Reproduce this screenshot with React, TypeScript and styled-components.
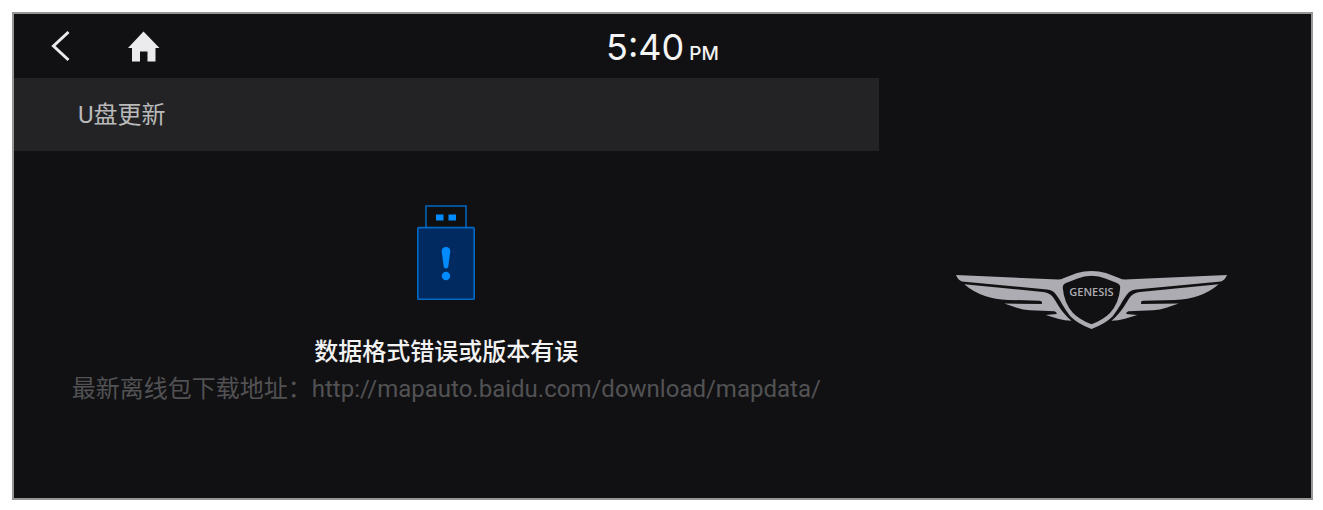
import React from "react";
import styled, { createGlobalStyle } from "styled-components";

const GlobalStyle = createGlobalStyle`
  * { box-sizing: border-box; }
  body {
    margin: 0;
    background: #ffffff;
    font-family: Roboto, "Noto Sans CJK SC", sans-serif;
  }
`;

const Page = styled.div`
  display: flex;
  min-height: 100vh;
  padding: 12px 10px 10px 12px;
`;

const Screen = styled.main`
  flex: 1;
  display: flex;
  flex-direction: column;
  border: 2px solid #969696;
  background: #111113;
`;

const StatusBar = styled.header`
  display: grid;
  grid-template-columns: 1fr auto 1fr;
  align-items: center;
  height: 64px;
  padding: 0 32px;
`;

const NavButtons = styled.nav`
  display: flex;
  gap: 50px;
`;

const IconButton = styled.button`
  display: flex;
  align-items: center;
  justify-content: center;
  width: 32px;
  height: 40px;
  padding: 0;
  border: 0;
  background: none;
  color: #ebebed;
  cursor: pointer;
`;

const Clock = styled.time`
  display: flex;
  align-items: baseline;
  gap: 5px;
  padding-top: 8px;
  font-family: Inter, sans-serif;
  font-size: 36px;
  line-height: 40px;
  color: #f4f4f4;
`;

const Meridiem = styled.span`
  font-size: 19px;
  font-weight: 500;
`;

const Body = styled.div`
  flex: 1;
  display: grid;
  grid-template-columns: 2fr 1fr;
`;

const UpdatePanel = styled.section`
  display: flex;
  flex-direction: column;
`;

const Title = styled.h1`
  margin: 0;
  padding: 2px 64px 0;
  background: #232325;
  color: #bababa;
  font-size: 24px;
  font-weight: 400;
  line-height: 71px;
`;

const Notice = styled.div`
  display: flex;
  flex-direction: column;
  align-items: center;
  padding-top: 54px;
  font-size: 24px;
  line-height: 37px;
  text-align: center;
`;

const Message = styled.p`
  margin: 34px 0 0;
  color: #f2f2f2;
  font-weight: 500;
`;

const Hint = styled.p`
  margin: 0;
  color: #525254;
`;

const DownloadLink = styled.a`
  color: inherit;
  text-decoration: none;
`;

const BrandPanel = styled.aside`
  display: flex;
  align-items: center;
  justify-content: center;
  padding: 24px 7px 0 0;
`;

const BrandName = styled.text`
  font-family: "Open Sans", sans-serif;
  font-size: 11px;
  font-weight: 600;
  fill: #adacb2;
`;

const BackIcon = () => (
  <svg width="32" height="40" viewBox="0 0 32 40" aria-hidden="true">
    <path d="M22.5 6 7.5 20l15 14" fill="none" stroke="currentColor" strokeWidth="3" />
  </svg>
);

const HomeIcon = () => (
  <svg width="32" height="40" viewBox="0 0 32 40" aria-hidden="true">
    <path d="M15.5 5.5 31.5 22H27.5V35.500h-8V25.500h-7.500V35.500H4V22H0Z" fill="currentColor" />
  </svg>
);

const UsbIcon = () => (
  <svg width="58" height="95" viewBox="0 0 58 95" aria-hidden="true">
    <path d="M9 22V1h40v21" fill="#0f0f10" stroke="#0069c4" strokeWidth="1.5" />
    <rect x="0.8" y="22.6" width="56.4" height="71.6" rx="0.8" fill="#002a60" stroke="#0069c4" strokeWidth="1.6" />
    <path d="M19 9.5h7.5v6H19zM31.5 9.5H39v6h-7.5z" fill="#008cff" />
    <path d="M24.7 46.5q0-4.5 4.3-4.5t4.3 4.5L31.3 61.5q-.4 2-2.3 2t-2.3-2Z" fill="#008cff" />
    <circle cx="29" cy="71" r="4.2" fill="#008cff" />
  </svg>
);

const wing =
  "M1 4 103 8.5Q106 8.5 109 7L122 2Q129 0 136.5 0H137V4.8H136.5Q129 5 122 7.8L111 12Q107.5 13.5 107.8 17Q109 32 118 42Q125 49 136.5 53.300H137V58H136.5Q123 53 115.5 45.500C108 36 106 30 101 23.500Q98 19.200 92 18.500L7 10.500Q3 9 1 4Z" +
  "M9.3 13.3 88 21Q94 21.5 97.5 25.500C103 33 106 41 116.500 49.700Q110 49.500 103 47.700L90.700 43.900 101.700 43Q102 41 99.500 40.300L75 39.300Q68 39 61.700 36.700L49.300 32.500 86.700 33Q88 30 84.500 29.700L53 28.900Q40 28.500 30 25Q18 21 9.300 13.300Z";

const WingedEmblem = () => (
  <svg width="273" height="58" viewBox="0 0 273 58" role="img" aria-label="Genesis">
    <g fill="#adacb2">
      <path d={wing} />
      <path d={wing} transform="translate(273 0) scale(-1 1)" />
    </g>
    <BrandName x="136.5" y="25" textAnchor="middle">
      GENESIS
    </BrandName>
  </svg>
);

export default function App() {
  return (
    <>
      <GlobalStyle />
      <Page>
        <Screen>
          <StatusBar>
            <NavButtons>
              <IconButton type="button" aria-label="返回">
                <BackIcon />
              </IconButton>
              <IconButton type="button" aria-label="主页">
                <HomeIcon />
              </IconButton>
            </NavButtons>
            <Clock dateTime="17:40">
              5:40<Meridiem>PM</Meridiem>
            </Clock>
          </StatusBar>
          <Body>
            <UpdatePanel>
              <Title>U盘更新</Title>
              <Notice>
                <UsbIcon />
                <Message>数据格式错误或版本有误</Message>
                <Hint>
                  最新离线包下载地址：
                  <DownloadLink href="http://mapauto.baidu.com/download/mapdata/">
                    http://mapauto.baidu.com/download/mapdata/
                  </DownloadLink>
                </Hint>
              </Notice>
            </UpdatePanel>
            <BrandPanel>
              <WingedEmblem />
            </BrandPanel>
          </Body>
        </Screen>
      </Page>
    </>
  );
}
